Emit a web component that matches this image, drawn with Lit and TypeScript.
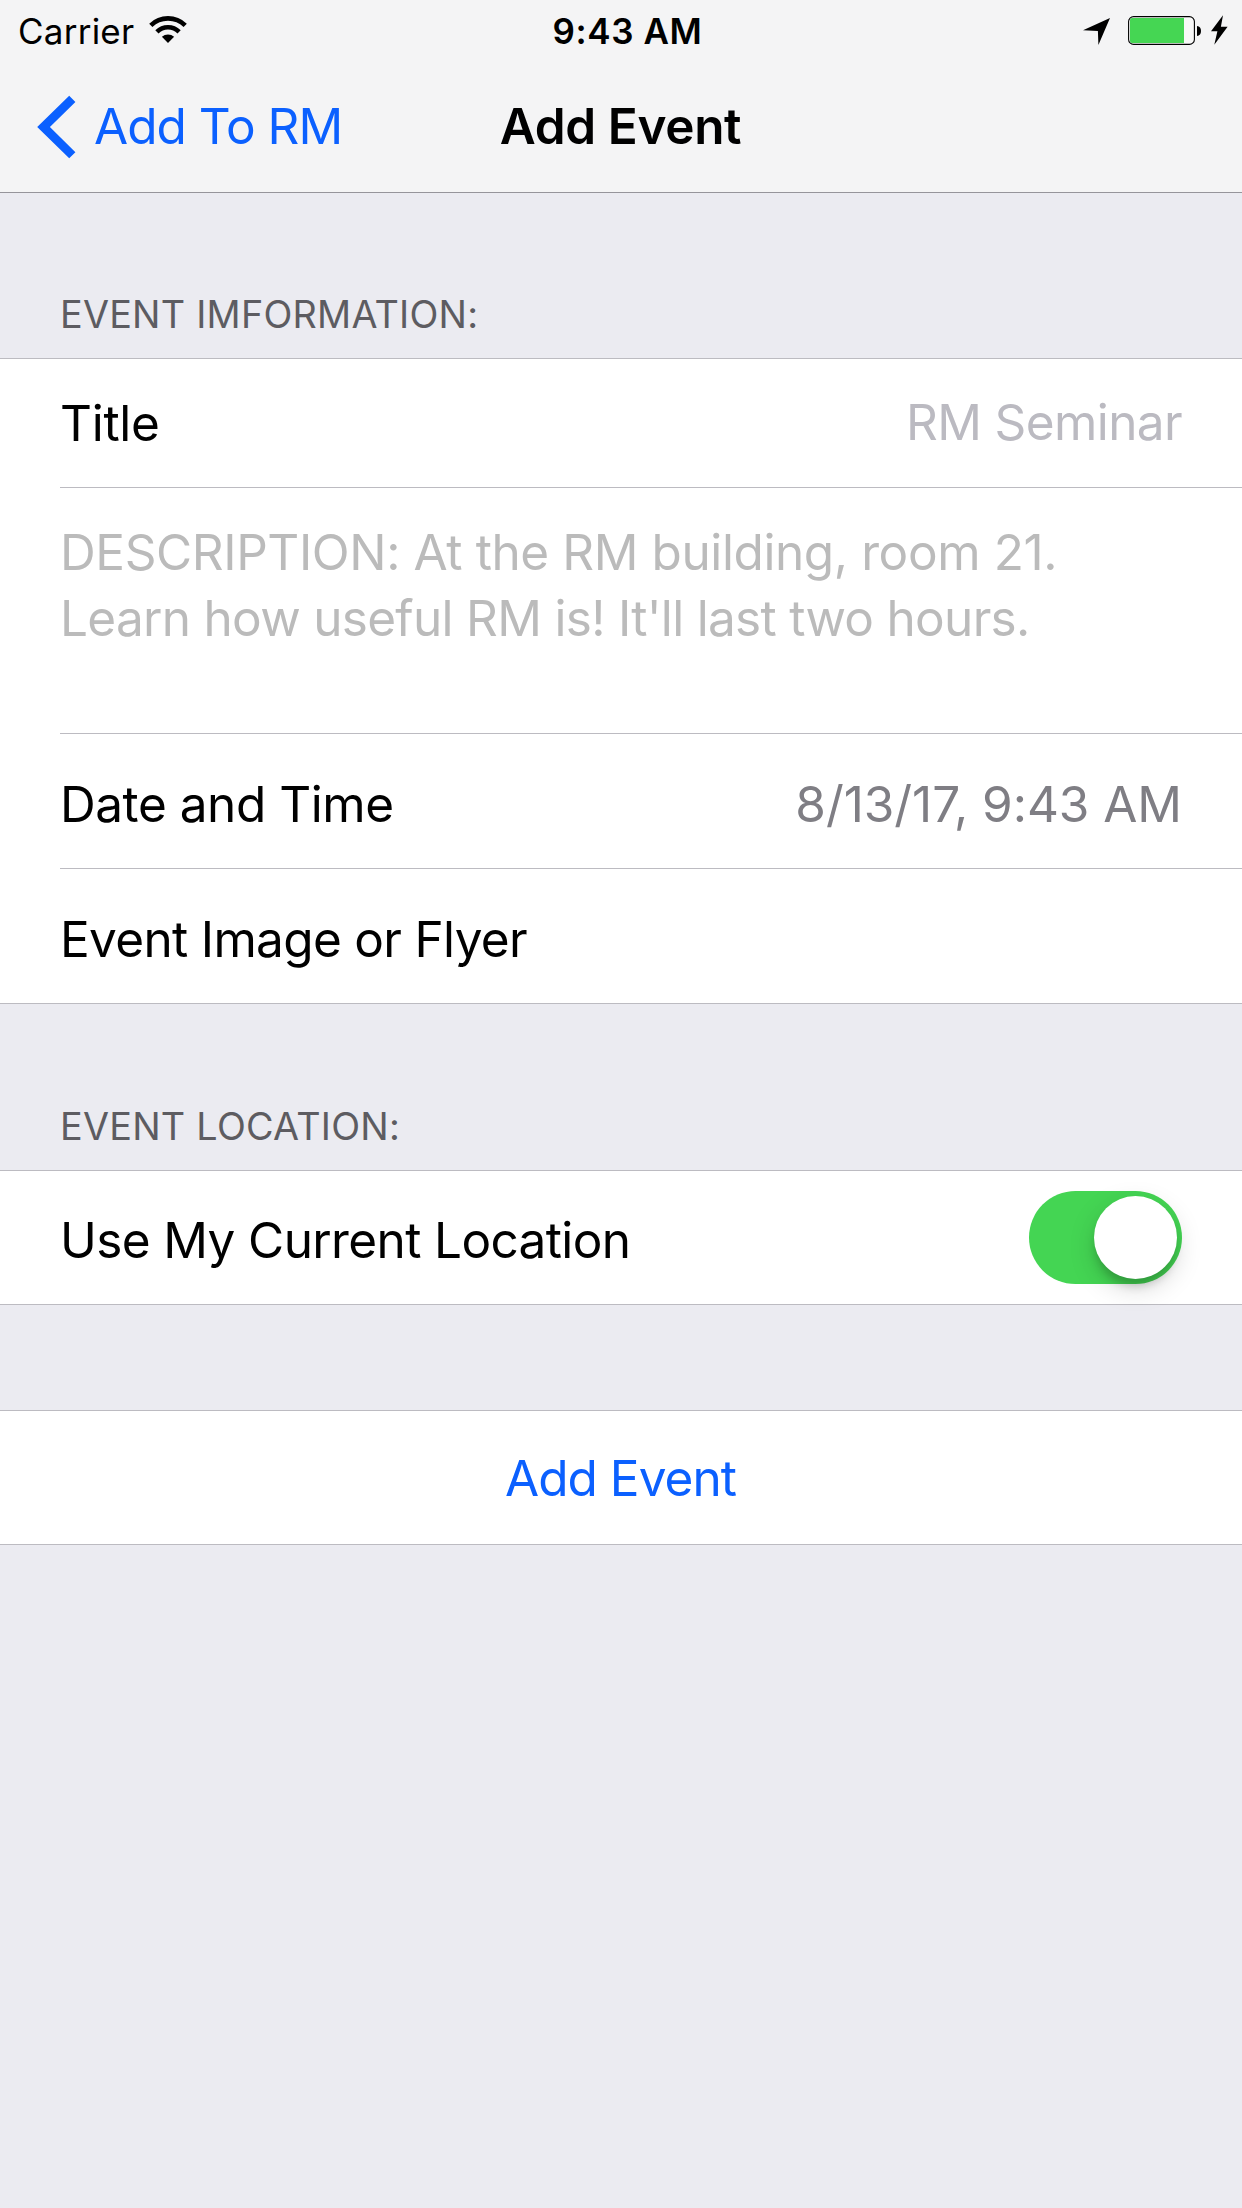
import { LitElement, html, css, svg } from "lit";
import { customElement, property, state } from "lit/decorators.js";

const wifiIcon = html`<svg class="wifi" width="38" height="28" viewBox="0 0 38 28">
  ${svg`<g fill="none" stroke="#000" stroke-width="4.6">
    <path d="M1.8 9.4A24.6 24.6 0 0 1 36.2 9.4" />
    <path d="M7.9 15.8A15.9 15.9 0 0 1 30.1 15.8" />
  </g>
  <path d="M12.9 20.8A9.2 9.2 0 0 1 25.1 20.8L19 27Z" />`}
</svg>`;

const locationIcon = html`<svg class="location" width="27" height="27" viewBox="0 0 27 27">
  <path d="M27 0L15.4 27L14.9 12.9L0 12.3Z" />
</svg>`;

const batteryIcon = html`<svg class="battery" width="74" height="29" viewBox="0 0 74 29">
  <rect x=".6" y=".6" width="65.8" height="27.8" rx="5" fill="#fff" fill-opacity=".35" stroke="#000" stroke-width="1.1" />
  <path d="M4 2H56V27H4Q2 27 2 25V4Q2 2 4 2Z" fill="#45d653" />
  <path d="M69 10C71.6 10 73 12.2 73 15S71.6 20 69 20Z" />
</svg>`;

const boltIcon = html`<svg class="bolt" width="17" height="30" viewBox="0 0 17 30">
  <path d="M12 .2L0 16.3H6.4L3.3 29.8L16.6 11.7H9.9Z" />
</svg>`;

const chevronIcon = html`<svg class="chevron" width="39" height="64" viewBox="0 0 39 64">
  <path d="M32.2 .8L38.4 7L12.9 32L38.4 57.2L32.2 63.3L.2 32Z" fill="#0b60ff" />
</svg>`;

@customElement("status-bar")
export class StatusBar extends LitElement {
  static styles = css`
    :host {
      display: grid;
      grid-template-columns: 1fr auto 1fr;
      height: 62px;
      font-size: 35px;
      line-height: 62px;
      color: #000;
    }
    svg { display: block; flex: none; }
    .left, .right { display: flex; align-items: flex-start; }
    .left { padding-left: 18px; }
    .carrier { letter-spacing: 0.24px; }
    .wifi { margin: 16px 0 0 15px; }
    .time { font-weight: 600; letter-spacing: 0.6px; padding-left: 13px; }
    .right { justify-content: flex-end; padding-right: 14px; }
    .location { margin: 18px 18px 0 0; }
    .battery { margin: 16px 9px 0 0; }
    .bolt { margin-top: 15px; }
  `;
  render() {
    return html`
      <div class="left"><span class="carrier">Carrier</span>${wifiIcon}</div>
      <div class="time">9:43 AM</div>
      <div class="right">${locationIcon}${batteryIcon}${boltIcon}</div>
    `;
  }
}

@customElement("nav-bar")
export class NavBar extends LitElement {
  static styles = css`
    :host {
      display: grid;
      grid-template-columns: 1fr auto 1fr;
      height: 130px;
      font-size: 49.5px;
      line-height: 128px;
      white-space: nowrap;
    }
    .back {
      display: flex;
      align-items: flex-start;
      gap: 18px;
      padding-left: 37px;
      color: #0b60ff;
      letter-spacing: -0.967px;
    }
    .chevron { display: block; margin-top: 33px; }
    .title { padding-right: 1px; font-weight: 600; letter-spacing: -0.35px; color: #000; }
  `;
  render() {
    return html`
      <div class="back">${chevronIcon}<span>Add To RM</span></div>
      <div class="title">Add Event</div>
      <div></div>
    `;
  }
}

@customElement("toggle-switch")
export class ToggleSwitch extends LitElement {
  @property({ type: Boolean, reflect: true }) on = false;
  static styles = css`
    :host {
      display: flex;
      justify-content: flex-start;
      box-sizing: border-box;
      width: 153px;
      height: 93px;
      padding: 5px;
      border-radius: 46.5px;
      background: #e5e5ea;
    }
    :host([on]) { justify-content: flex-end; background: #44d553; }
    .knob {
      width: 83px;
      height: 83px;
      border-radius: 50%;
      background: #fff;
      box-shadow: 0 9px 26px rgba(0, 0, 0, 0.17), 0 9px 9px -2px rgba(0, 0, 0, 0.17);
    }
  `;
  render() {
    return html`<div class="knob"></div>`;
  }
}

@customElement("app-root")
export class AppRoot extends LitElement {
  @state() private useLocation = true;

  static styles = css`
    :host {
      display: block;
      box-sizing: border-box;
      width: 100%;
      min-height: 2208px;
      background: #ebebf1;
      font-family: Inter, "Liberation Sans", sans-serif;
      color: #000;
      overflow: hidden;
    }
    .header {
      height: 192px;
      background: #f4f4f5;
      border-bottom: 1px solid #96959b;
    }
    .heading {
      display: flex;
      align-items: flex-end;
      box-sizing: border-box;
      height: 165px;
      padding: 0 60px 21px;
      font-size: 37.75px;
      line-height: 46px;
      letter-spacing: 0.23px;
      color: #5d5c61;
    }
    .heading.location { height: 166px; letter-spacing: 0.25px; }
    .group {
      background: #fff;
      border-top: 1px solid #bcbbc1;
      border-bottom: 1px solid #bcbbc1;
      font-size: 49.5px;
      line-height: 60px;
      white-space: nowrap;
    }
    .row {
      display: flex;
      align-items: center;
      justify-content: space-between;
      box-sizing: border-box;
      margin-left: 60px;
      padding-right: 60px;
    }
    .divided { border-bottom: 1px solid #bcbbc1; }
    .title-row { height: 129px; }
    .title-label { letter-spacing: -0.28px; }
    .placeholder { color: #bbbac1; letter-spacing: -0.61px; padding-bottom: 2px; }
    .description {
      display: block;
      height: 246px;
      padding-top: 31px;
      line-height: 66px;
      color: #bbb;
    }
    .line-one { letter-spacing: -0.4px; }
    .line-two { letter-spacing: -0.7px; }
    .date-row { height: 135px; padding-top: 6px; }
    .date-label { letter-spacing: -0.45px; }
    .date-value { letter-spacing: -0.05px; color: #7f7e84; }
    .image-row { height: 134px; padding-top: 6px; letter-spacing: -0.674px; }
    .location-row { height: 133px; }
    .location-label { letter-spacing: -0.62px; padding-top: 5px; }
    .action { margin-top: 105px; }
    .button {
      display: flex;
      align-items: center;
      justify-content: center;
      height: 133px;
      padding-right: 1px;
      color: #0b60ff;
      letter-spacing: -0.95px;
    }
  `;

  render() {
    return html`
      <div class="header">
        <status-bar></status-bar>
        <nav-bar></nav-bar>
      </div>

      <div class="heading">EVENT IMFORMATION:</div>
      <div class="group">
        <div class="row divided title-row">
          <span class="title-label">Title</span>
          <span class="placeholder">RM Seminar</span>
        </div>
        <div class="row divided description">
          <div class="line-one">DESCRIPTION: At the RM building, room 21.</div>
          <div class="line-two">Learn how useful RM is! It'll last two hours.</div>
        </div>
        <div class="row divided date-row">
          <span class="date-label">Date and Time</span>
          <span class="date-value">8/13/17, 9:43 AM</span>
        </div>
        <div class="row image-row"><span>Event Image or Flyer</span></div>
      </div>

      <div class="heading location">EVENT LOCATION:</div>
      <div class="group">
        <div class="row location-row">
          <span class="location-label">Use My Current Location</span>
          <toggle-switch
            ?on=${this.useLocation}
            @click=${() => (this.useLocation = !this.useLocation)}
          ></toggle-switch>
        </div>
      </div>

      <div class="group action">
        <div class="button">Add Event</div>
      </div>
    `;
  }
}
